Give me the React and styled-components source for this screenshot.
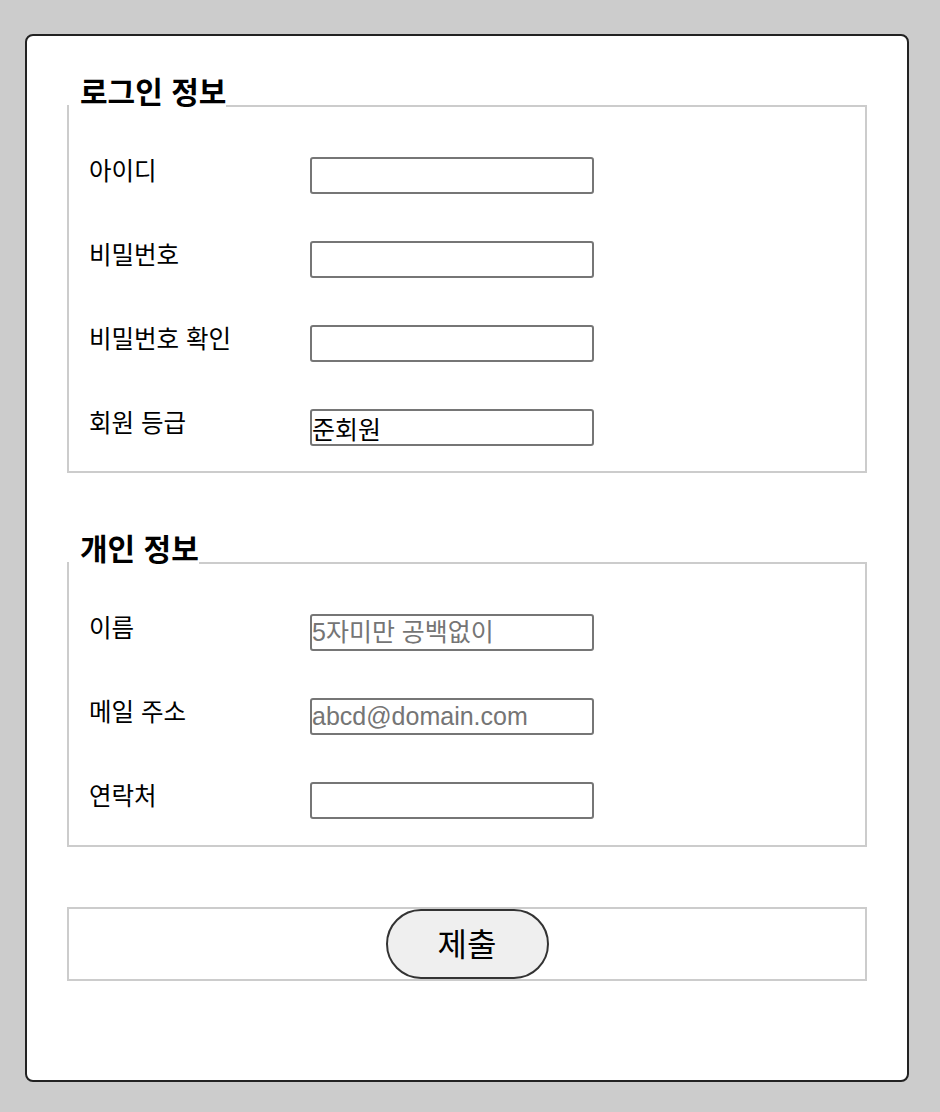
import React from 'react'
import styled, { createGlobalStyle } from 'styled-components'

const GlobalStyle = createGlobalStyle`
  html, body {
    margin: 0;
    background: #ccc;
  }
  body {
    font-family: "Liberation Sans", "Noto Sans CJK KR", sans-serif;
    color: #000;
  }
`

const Card = styled.form`
  box-sizing: border-box;
  width: 884px;
  margin: 34px 0 30px 25px;
  padding: 42px 40px 99px;
  background: #fff;
  border: 2px solid #222;
  border-radius: 8px;
`

const Section = styled.fieldset`
  margin: ${p => p.$top || 0}px 0 0;
  padding: ${p => (p.$plain ? '0' : `23px 0 ${p.$bottom || 25}px`)};
  border: 2px solid #ccc;
  min-width: 0;
`

const Legend = styled.legend`
  padding: 0 0 26px 11px;
  font-size: 30px;
  line-height: 30px;
  font-weight: 700;
`

const Rows = styled.div`
  display: grid;
  grid-template-columns: 221px 284px;
  row-gap: 47px;
  align-items: start;
  padding-left: 20px;
`

const Label = styled.label`
  padding-top: 3px;
  font-size: 24.5px;
  line-height: 24.5px;
`

const Input = styled.input`
  box-sizing: border-box;
  width: 284px;
  height: 37px;
  margin: 0;
  padding: 1px 1px 1px 0;
  border: 2px solid #767676;
  border-radius: 3px;
  background: #fff;
  font-family: inherit;
  font-size: 25px;
  color: #000;
  outline: none;

  &::placeholder {
    color: #757575;
  }
`

const Submit = styled.button`
  display: block;
  box-sizing: border-box;
  width: 163px;
  height: 70px;
  margin: 0 auto;
  padding: 0 0 5px;
  border: 2px solid #333;
  border-radius: 35px;
  background: #efefef;
  font-family: inherit;
  font-size: 32px;
  color: #000;
`

const loginFields = [
  { id: 'uid', label: '아이디' },
  { id: 'pw', label: '비밀번호', type: 'password' },
  { id: 'pw2', label: '비밀번호 확인', type: 'password' },
  { id: 'grade', label: '회원 등급', value: '준회원' },
]

const personFields = [
  { id: 'name', label: '이름', placeholder: '5자미만 공백없이' },
  { id: 'mail', label: '메일 주소', placeholder: 'abcd@domain.com' },
  { id: 'tel', label: '연락처' },
]

function Field({ id, label, type = 'text', value, placeholder }) {
  return (
    <>
      <Label htmlFor={id}>{label}</Label>
      <Input
        id={id}
        type={type}
        defaultValue={value}
        placeholder={placeholder}
        readOnly={value !== undefined}
      />
    </>
  )
}

export default function App() {
  return (
    <>
      <GlobalStyle />
      <Card onSubmit={e => e.preventDefault()}>
        <Section>
          <Legend>로그인 정보</Legend>
          <Rows>
            {loginFields.map(f => <Field key={f.id} {...f} />)}
          </Rows>
        </Section>

        <Section $top={62} $bottom={26}>
          <Legend>개인 정보</Legend>
          <Rows>
            {personFields.map(f => <Field key={f.id} {...f} />)}
          </Rows>
        </Section>

        <Section $top={60} $plain>
          <Submit type="submit">제출</Submit>
        </Section>
      </Card>
    </>
  )
}
